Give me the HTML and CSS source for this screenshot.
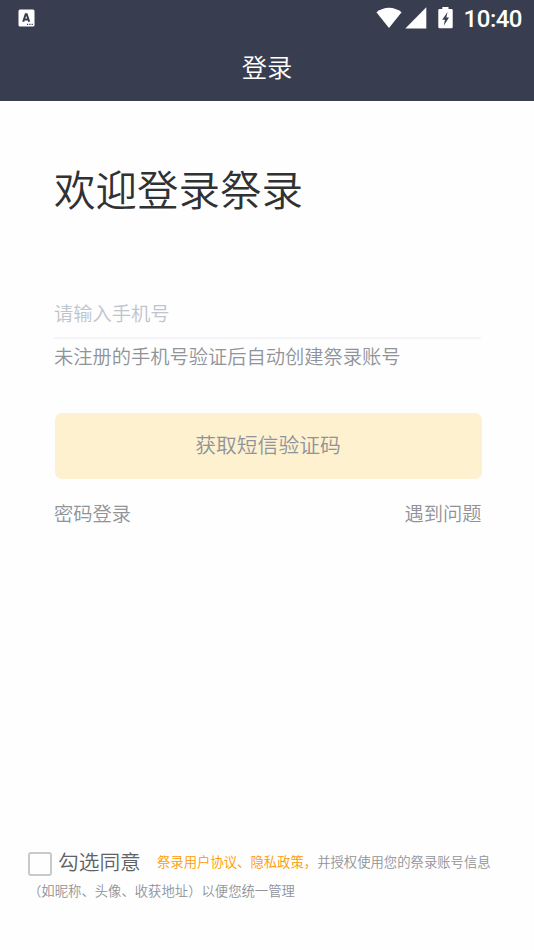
FILE: index.html
```html
<!DOCTYPE html>
<html lang="zh-CN">
<head>
<meta charset="utf-8">
<meta name="viewport" content="width=device-width, initial-scale=1">
<title>登录</title>
<link rel="stylesheet" href="styles.css">
</head>
<body>
<header class="header">
  <div class="status">
    <svg class="app-icon" width="17" height="18" viewBox="0 0 17 18">
      <rect x=".5" y=".5" width="16" height="17" rx="1.5" fill="#fff"/>
      <path d="M5.2 12.8 7.7 5.2H8.7L11.2 12.8M6.3 10.4H10.1" fill="none" stroke="#383e50" stroke-width="2"/>
      <path d="M9 15.3h1.2M11.3 15.3h1.2M13.6 15.3h1.2" stroke="#383e50" stroke-width="1.2"/>
    </svg>
    <div class="indicators">
      <svg class="wifi" width="26" height="22" viewBox="0 0 26 22"><path d="M.4 5.2C7.8-.9 18.2-.9 25.6 5.2L13 21Z" fill="#fff"/></svg>
      <svg class="signal" width="22" height="22" viewBox="0 0 22 22"><path d="M.3 21.5 21.3.3V21.5Z" fill="#fff"/></svg>
      <svg class="battery" width="15" height="22" viewBox="0 0 15 22"><path d="M4.3 0h6.2v2h3Q14.7 2 14.7 3.2V20Q14.7 21.2 13.5 21.2H1.5Q.3 21.2.3 20V3.2Q.3 2 1.5 2H4.3Z" fill="#fff"/><path d="M9.6 5 4.2 12.7H7L5.7 18.8 11 10.6H8.3Z" fill="#383e50"/></svg>
      <span class="clock">10:40</span>
    </div>
  </div>
  <div class="title">登录</div>
</header>
<main class="login">
  <h1 class="welcome">欢迎登录祭录</h1>
  <input class="phone" type="tel" placeholder="请输入手机号">
  <p class="note">未注册的手机号验证后自动创建祭录账号</p>
  <button class="submit">获取短信验证码</button>
  <nav class="links"><span>密码登录</span><span>遇到问题</span></nav>
</main>
<footer class="agreement">
  <div class="agree-row">
    <span class="checkbox"></span>
    <span class="agree">勾选同意</span>
    <span class="terms"><span class="policy">祭录用户协议、隐私政策，</span>并授权使用您的祭录账号信息</span>
  </div>
  <div class="more">（如昵称、头像、收获地址）以便您统一管理</div>
</footer>
</body>
</html>
```

FILE: styles.css
```css
* { box-sizing: border-box; }
body {
  margin: 0;
  height: 950px;
  display: flex;
  flex-direction: column;
  background: #fefefe;
  color: #909399;
  font-family: "Noto Sans CJK SC", sans-serif;
  font-weight: 350;
  overflow: hidden;
}
.header { height: 101px; background: #383e50; color: #fff; }
.status { height: 36px; padding: 0 12px 0 18px; display: flex; align-items: center; justify-content: space-between; }
.indicators { display: flex; align-items: center; }
.signal { margin-left: 3px; }
.battery { margin-left: 11px; }
.clock { margin-left: 11px; padding-top: 1px; font: 500 24px/36px Roboto, sans-serif; letter-spacing: -.5px; }
.title { font-size: 25.3px; line-height: 38px; margin-top: 11px; text-align: center; }
.login { padding: 57px 52.5px 0 54px; flex: 1; }
.welcome { margin: 0; font-size: 41.5px; line-height: 60px; font-weight: 350; color: #303133; }
.phone {
  display: block;
  width: 427px;
  height: 50px;
  margin: 71px 0 0;
  padding: 0;
  border: 0;
  border-bottom: 2px solid #f4f4f9;
  border-radius: 0;
  outline: 0;
  background: none;
  font: 350 19.25px/28px "Noto Sans CJK SC", sans-serif;
}
.phone::placeholder { color: #c0c4cc; opacity: 1; }
.note { margin: 3px 0 0; font-size: 19.25px; line-height: 28px; }
.submit {
  display: block;
  width: 427px;
  height: 66px;
  margin: 43px 0 0 1px;
  padding: 0 1px 4px 0;
  border: 0;
  border-radius: 7px;
  background: #fdf1d0;
  color: #909399;
  font: 350 20.8px/30px "Noto Sans CJK SC", sans-serif;
}
.links { display: flex; justify-content: space-between; margin-top: 20px; font-size: 19.25px; line-height: 28px; }
.agreement { height: 104px; padding-left: 28px; font-size: 13.35px; white-space: nowrap; }
.agree-row { height: 32px; display: flex; align-items: center; }
.checkbox { width: 24px; height: 24px; margin-top: 4px; border: 2px solid #c8c9cc; border-radius: 3px; }
.agree { margin: -2px 0 0 6px; width: 99px; font-size: 20.7px; line-height: 30px; color: #606266; }
.terms { line-height: 20px; }
.policy { color: #ff9900; }
.more { line-height: 20px; margin-top: 3px; }
```
